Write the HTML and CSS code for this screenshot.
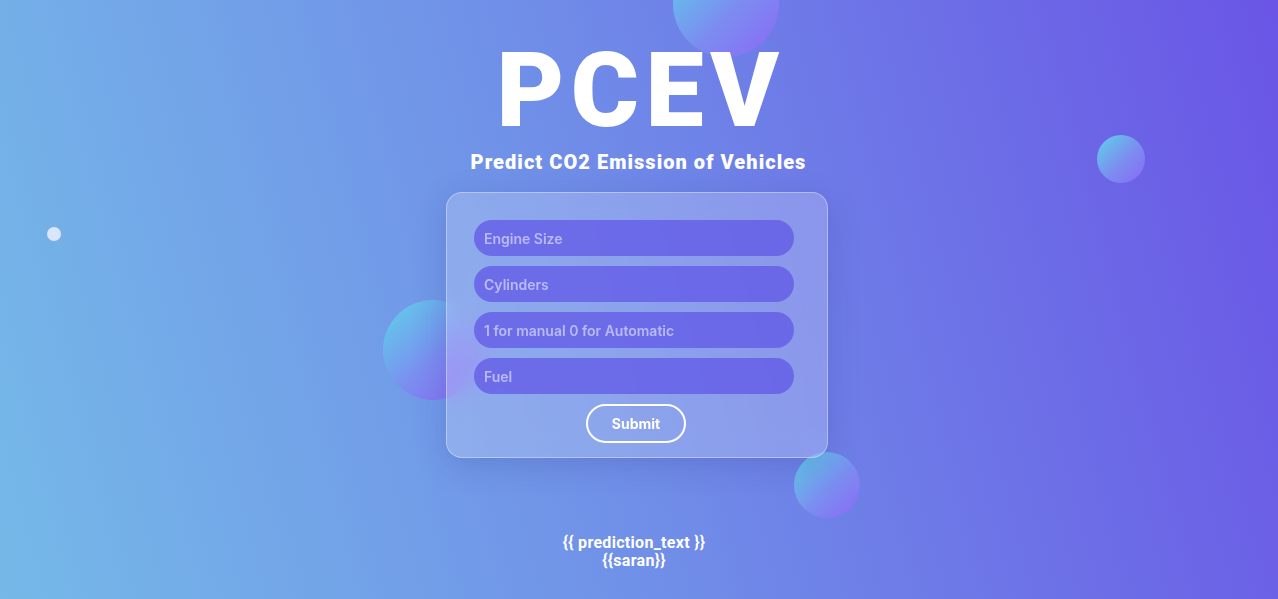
FILE: index.html
```html
<!DOCTYPE html>
<html>
<head>
<meta charset="utf-8">
<link rel="stylesheet" href="styles.css">
</head>
<body>
<div class="page">
  <span class="bubble b-top"></span>
  <span class="bubble b-right"></span>
  <span class="bubble b-dot"></span>
  <span class="bubble b-left"></span>
  <span class="bubble b-bottom"></span>

  <h1 class="title">PCEV</h1>
  <h2 class="subtitle">Predict CO2 Emission of Vehicles</h2>

  <form class="card">
    <input class="field" type="text" placeholder="Engine Size">
    <input class="field" type="text" placeholder="Cylinders">
    <input class="field" type="text" placeholder="1 for manual 0 for Automatic">
    <input class="field" type="text" placeholder="Fuel">
    <button class="submit" type="button">Submit</button>
  </form>

  <div class="result">
    <div>{{ prediction_text }}</div>
    <div>{{saran}}</div>
  </div>
</div>
</body>
</html>
```

FILE: styles.css
```css
* { box-sizing: border-box; }
html, body { margin: 0; padding: 0; }
body {
  width: 1278px;
  height: 599px;
  overflow: hidden;
  font-family: "Roboto", "Liberation Sans", sans-serif;
}
.page {
  position: relative;
  width: 1278px;
  height: 599px;
  overflow: hidden;
  background: linear-gradient(75deg, #75b9e8 0%, #7090e8 45%, #6a55e6 100%);
  display: flex;
  flex-direction: column;
  align-items: center;
  padding-top: 39px;
}
.bubble {
  position: absolute;
  border-radius: 50%;
  background: linear-gradient(135deg, #5ed3ea 0%, #7b8df0 55%, #8b68f6 100%);
  z-index: 0;
}
.b-top { left: 673px; top: -49px; width: 106px; height: 106px; }
.b-right { left: 1097px; top: 135px; width: 48px; height: 48px; }
.b-dot { left: 47px; top: 227px; width: 14px; height: 14px; background: rgba(235, 240, 255, 0.85); filter: blur(0.6px); }
.b-left { left: 383px; top: 300px; width: 100px; height: 100px; }
.b-bottom { left: 794px; top: 452px; width: 66px; height: 66px; }

.title {
  position: relative;
  z-index: 1;
  margin: 0 0 0 4px;
  font-size: 104px;
  line-height: 104px;
  font-weight: 900;
  letter-spacing: 6.5px;
  color: #ffffff;
}
.subtitle {
  position: relative;
  z-index: 1;
  margin: 7px 0 0 -1px;
  font-size: 20px;
  line-height: 24px;
  font-weight: 900;
  letter-spacing: 1.05px;
  color: #ffffff;
}
.card {
  position: relative;
  z-index: 1;
  margin: 18px 0 0 -4px;
  width: 382px;
  padding: 27px 27px 14px 27px;
  border: 1px solid rgba(255, 255, 255, 0.35);
  border-radius: 16px;
  background: rgba(255, 255, 255, 0.2);
  backdrop-filter: blur(12px);
  box-shadow: 0 8px 32px rgba(40, 40, 120, 0.18);
  display: flex;
  flex-direction: column;
  gap: 10px;
}
.field {
  width: 320px;
  height: 36px;
  border: none;
  outline: none;
  border-radius: 18px;
  background: rgba(98, 88, 230, 0.75);
  padding: 0 10px;
  font-family: "Inter", "Liberation Sans", sans-serif;
  font-size: 14px;
  font-weight: 600;
  color: #ffffff;
}
.field::placeholder { color: rgba(205, 205, 252, 0.8); }
.submit {
  align-self: center;
  margin-left: -2px;
  width: 100px;
  height: 39px;
  border: 2px solid #ffffff;
  border-radius: 20px;
  background: transparent;
  color: #ffffff;
  font-family: "Inter", "Liberation Sans", sans-serif;
  font-size: 14px;
  font-weight: 700;
}
.result {
  position: relative;
  z-index: 1;
  margin: 76px 0 0 -10px;
  text-align: center;
  color: #ffffff;
  font-size: 16px;
  line-height: 18px;
  font-weight: 700;
  letter-spacing: 0.3px;
}
```
